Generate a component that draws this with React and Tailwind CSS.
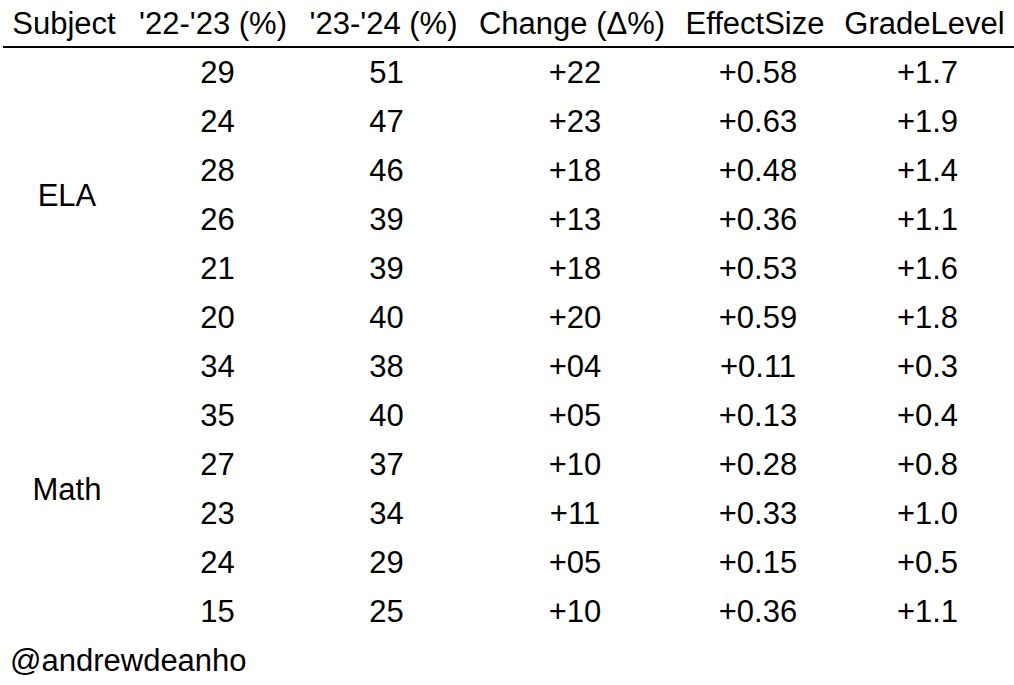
const headers = ["Subject", "'22-'23 (%)", "'23-'24 (%)", "Change (Δ%)", "EffectSize", "GradeLevel"];

const rows = [
  ["29", "51", "+22", "+0.58", "+1.7"],
  ["24", "47", "+23", "+0.63", "+1.9"],
  ["28", "46", "+18", "+0.48", "+1.4"],
  ["26", "39", "+13", "+0.36", "+1.1"],
  ["21", "39", "+18", "+0.53", "+1.6"],
  ["20", "40", "+20", "+0.59", "+1.8"],
  ["34", "38", "+04", "+0.11", "+0.3"],
  ["35", "40", "+05", "+0.13", "+0.4"],
  ["27", "37", "+10", "+0.28", "+0.8"],
  ["23", "34", "+11", "+0.33", "+1.0"],
  ["24", "29", "+05", "+0.15", "+0.5"],
  ["15", "25", "+10", "+0.36", "+1.1"],
];

const cols = "grid grid-cols-[128px_170px_171px_206px_160px_179px]";

function Cells({ list, tag }) {
  return list.map((r, i) =>
    r.map((v, j) => (
      <div key={`${tag}${i}${j}`} className={`text-center ${j === 0 ? "pl-[9px]" : "pl-[6px]"}`}>
        {v}
      </div>
    ))
  );
}

export default function App() {
  return (
    <div className="w-[1014px] h-[685px] bg-white text-black text-[31px] leading-none overflow-hidden font-['Liberation_Sans',Arial,sans-serif]">
      <div className={`${cols} h-[46px] items-center`}>
        {headers.map((h) => (
          <div key={h} className="text-center whitespace-nowrap">{h}</div>
        ))}
      </div>
      <div className="ml-[3px] h-[2px] bg-black" />

      <div className={`${cols} auto-rows-[49px] items-center`}>
        <div className="row-span-6 text-center pl-[6px]">ELA</div>
        <Cells list={rows.slice(0, 6)} tag="a" />
        <div className="row-span-6 text-center pl-[6px]">Math</div>
        <Cells list={rows.slice(6)} tag="b" />
      </div>

      <div className="h-[49px] flex items-center pl-[10px]">@andrewdeanho</div>
    </div>
  );
}
